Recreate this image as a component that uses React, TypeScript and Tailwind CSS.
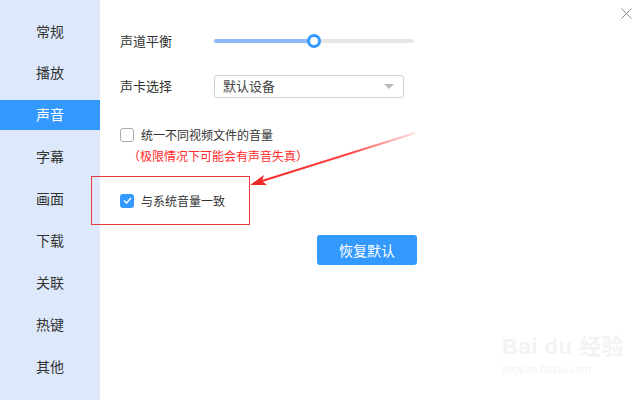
const menu = ["常规", "播放", "声音", "字幕", "画面", "下载", "关联", "热键", "其他"];

export default function App() {
  const active = "声音";

  return (
    <div
      className="relative flex w-[640px] h-[400px] bg-white text-[#333] overflow-hidden"
      style={{ fontFamily: '"Noto Sans CJK SC", "Noto Sans", sans-serif' }}
    >
      {/* 左侧菜单 */}
      <div className="w-[100px] h-full bg-[#dde9fb] flex flex-col gap-[11.9px] pt-[16px]">
        {menu.map((item) => (
          <div
            key={item}
            className={
              item === active
                ? "h-[30px] flex items-center justify-center text-[14px] bg-[#3399ff] text-white"
                : "h-[30px] flex items-center justify-center text-[14px] text-[#333]"
            }
          >
            {item}
          </div>
        ))}
      </div>

      {/* 右侧设置 */}
      <div className="flex-1 flex flex-col pl-[20px] text-[13px]">
        <div className="flex items-center h-[20px] mt-[31px]">
          <span className="w-[94px]">声道平衡</span>
          <div className="relative w-[200px] h-[4px] bg-[#e6e6e6] rounded-full">
            <div className="h-full w-[99px] bg-[#8cb9f8] rounded-full" />
            <div className="absolute left-[93px] top-[-5px] w-[14px] h-[14px] rounded-full border-[3px] border-[#3399ff] bg-white" />
          </div>
        </div>

        <div className="flex items-center h-[22px] mt-[24px]">
          <span className="w-[94px]">声卡选择</span>
          <div className="w-[190px] h-[23px] border border-[#cfcfcf] rounded-[3px] flex items-center justify-between pl-[8px] pr-[9px]">
            <span className="text-[#444]">默认设备</span>
            <span className="w-0 h-0 border-l-[5px] border-r-[5px] border-t-[5px] border-l-transparent border-r-transparent border-t-[#bbb]" />
          </div>
        </div>

        <div className="flex items-center gap-[7px] mt-[30px] h-[16px] text-[12px]">
          <span className="w-[14px] h-[14px] border border-[#aaa] rounded-[3px] bg-white" />
          <span>统一不同视频文件的音量</span>
        </div>
        <div className="mt-[4px] ml-[8px] text-[12px] text-[#ff2a2a]">（极限情况下可能会有声音失真）</div>

        <div className="mt-[11px] ml-[-29px] w-[159px] h-[49px] border border-[#e8393a] flex items-center pl-[28px] gap-[7px] text-[12px]">
          <span className="w-[14px] h-[14px] rounded-[3px] bg-[#3399ff] flex items-center justify-center">
            <svg width="9" height="7" viewBox="0 0 9 7" fill="none">
              <path d="M1 3.5 L3.5 6 L8 1" stroke="white" strokeWidth="1.4" />
            </svg>
          </span>
          <span>与系统音量一致</span>
        </div>

        <div className="mt-[10px] ml-[197px] w-[100px] h-[30px] rounded-[3px] bg-[#3399ff] text-white text-[14px] flex items-center justify-center">
          恢复默认
        </div>
      </div>

      {/* 关闭按钮 */}
      <svg className="absolute left-[621px] top-[8px]" width="11" height="11" viewBox="0 0 11 11">
        <path d="M0.5 0.5 L10.5 10.5 M10.5 0.5 L0.5 10.5" stroke="#888" strokeWidth="1" />
      </svg>

      {/* 标注箭头 */}
      <svg className="absolute left-0 top-0 pointer-events-none" width="640" height="400">
        <defs>
          <linearGradient id="fade" x1="415" y1="133" x2="250" y2="184" gradientUnits="userSpaceOnUse">
            <stop offset="0" stopColor="#ff3b3b" stopOpacity="0.15" />
            <stop offset="0.4" stopColor="#ff3030" stopOpacity="0.9" />
            <stop offset="1" stopColor="#f02a2a" />
          </linearGradient>
        </defs>
        <path d="M415 133 L262 181" stroke="url(#fade)" strokeWidth="2" />
        <path d="M250 185 L264 175 L262 181 L267 185 Z" fill="#ee2a2a" />
      </svg>

      {/* 水印 */}
      <div className="absolute left-[502px] top-[336px] flex flex-col items-start text-[#f3f3f3]">
        <span className="text-[22px] leading-none font-bold tracking-wide" style={{ fontFamily: '"Liberation Sans", "Noto Sans CJK SC", sans-serif' }}>
          Bai du 经验
        </span>
        <span className="text-[11px] leading-none mt-[6px]" style={{ fontFamily: '"Liberation Sans", sans-serif' }}>
          jingyan.baidu.com
        </span>
      </div>
    </div>
  );
}
